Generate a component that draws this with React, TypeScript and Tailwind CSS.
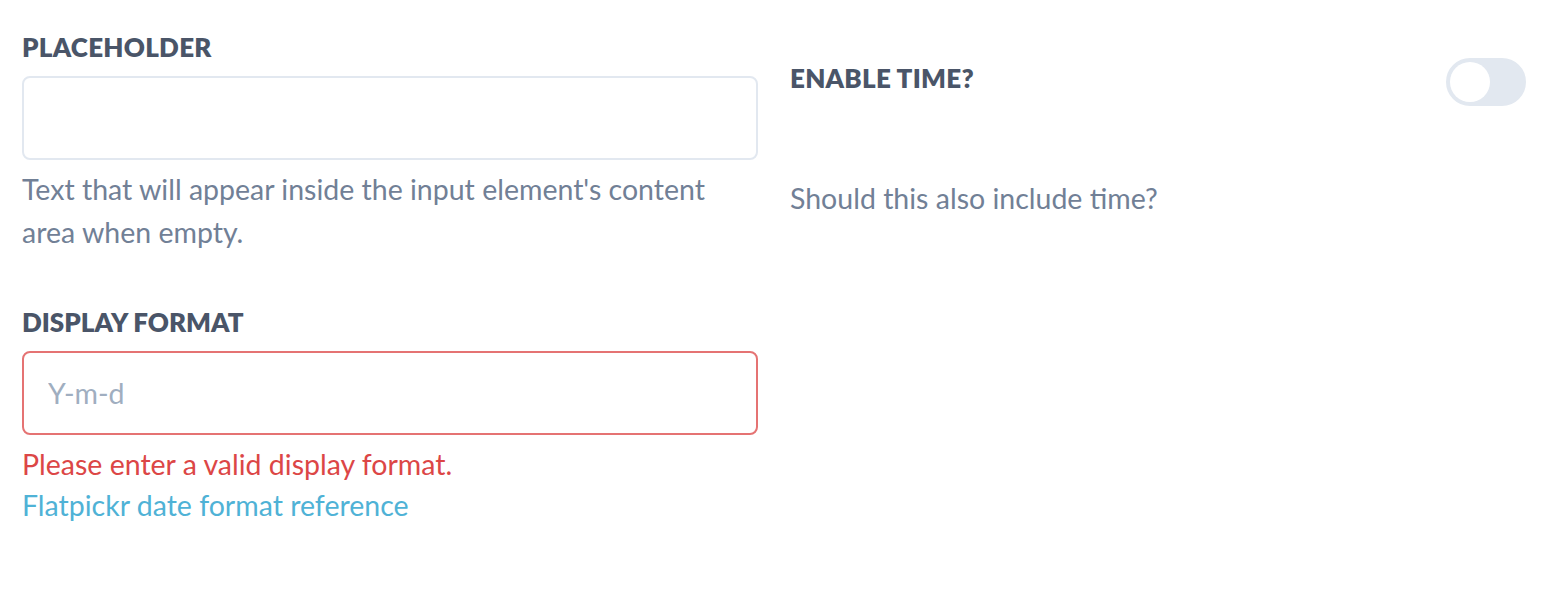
import React from "react";

export default function App() {
  return (
    <div className="w-[1560px] h-[590px] bg-white font-['Lato','Noto_Sans',sans-serif]">
      <div className="grid grid-cols-[736px_736px] gap-x-[32px] pl-[22px] pt-[30px]">
        <div className="flex flex-col">
          <label className="text-[26px] leading-[34px] font-extrabold uppercase tracking-[0.01em] text-[#4a5568]">
            Placeholder
          </label>
          <input
            className="mt-[12px] h-[84px] w-full rounded-[8px] border-2 border-[#e2e8f0] bg-white px-[24px] text-[28.5px] outline-none"
            type="text"
          />
          <p className="mt-[8px] text-[28.5px] leading-[43px] text-[#718096]">
            Text that will appear inside the input element's content area when empty.
          </p>
          <label className="mt-[51px] text-[26px] leading-[34px] font-extrabold uppercase tracking-[0em] text-[#4a5568]">
            Display Format
          </label>
          <input
            className="mt-[12px] h-[84px] w-full rounded-[8px] border-2 border-[#e57373] bg-white px-[24px] text-[28.5px] outline-none placeholder:text-[#a0aec0]"
            type="text"
            placeholder="Y-m-d"
          />
          <p className="mt-[9px] text-[28.5px] leading-[41px] text-[#dc4646]">
            Please enter a valid display format.
          </p>
          <a className="text-[28.5px] leading-[41px] text-[#4fb2d6]">Flatpickr date format reference</a>
        </div>
        <div className="flex flex-col">
          <div className="flex items-start justify-between pt-[28px]">
            <label className="mt-[3px] text-[26px] leading-[34px] font-extrabold uppercase tracking-[0.01em] text-[#4a5568]">
              Enable Time?
            </label>
            <div className="relative h-[48px] w-[80px] rounded-full border-2 border-[#e2e8f0] bg-[#e2e8f0]">
              <div className="absolute left-[2px] top-[2px] h-[40px] w-[40px] rounded-full bg-white" />
            </div>
          </div>
          <p className="mt-[72px] text-[28.5px] leading-[40px] text-[#718096]">Should this also include time?</p>
        </div>
      </div>
    </div>
  );
}
